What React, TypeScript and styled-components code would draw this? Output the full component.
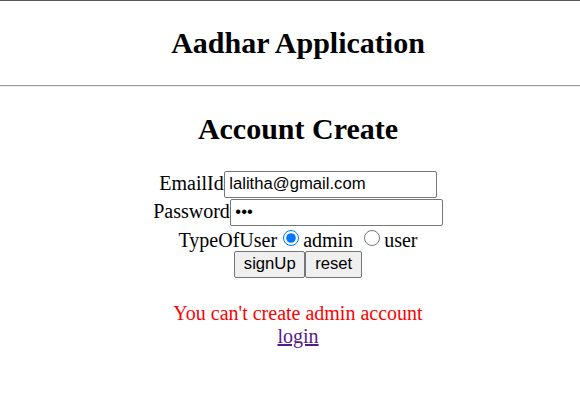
import React from "react";
import styled, { createGlobalStyle } from "styled-components";

const GlobalStyle = createGlobalStyle`
  html, body {
    margin: 0;
    padding: 0;
    background: #ffffff;
  }
  body {
    font-family: "Liberation Serif", "Times New Roman", serif;
    font-size: 20px;
    color: #000000;
    overflow: hidden;
  }
`;

const Page = styled.div`
  width: 580px;
  height: 415px;
  overflow: hidden;
`;

const Header = styled.header`
  border-top: 1px solid #555555;
  padding-left: 16px;
  text-align: center;
`;

const Heading = styled.h2`
  font-size: 30px;
  font-weight: bold;
  line-height: normal;
  margin: 24.9px 0;
`;

const Divider = styled.hr`
  margin: 0;
  height: 0;
  border: 0;
  border-top: 1px solid #9a9a9a;
  border-bottom: 1px solid #eeeeee;
`;

const Main = styled.main`
  padding-left: 16px;
  text-align: center;
`;

const Form = styled.form`
  margin: 0;
`;

const Line = styled.div<{ $h?: number }>`
  text-align: center;
  white-space: nowrap;
  ${(p) => (p.$h ? `height: ${p.$h}px;` : "")}
`;

const TextInput = styled.input`
  box-sizing: border-box;
  width: 213px;
  height: 27px;
  padding: 0 4.5px;
  border: 1px solid #767676;
  border-radius: 2px;
  font-family: "Liberation Sans", Arial, sans-serif;
  font-size: 16.67px;
  color: #000000;
  background: #ffffff;
  vertical-align: baseline;
`;

const Radio = styled.input`
  width: 16px;
  height: 16px;
  margin: 3.75px 3.75px 0 6.25px;
  vertical-align: baseline;
`;

const Button = styled.button`
  box-sizing: border-box;
  height: 27px;
  padding: 0 8.75px;
  border: 1px solid #767676;
  border-radius: 2px;
  background: #efefef;
  font-family: "Liberation Sans", Arial, sans-serif;
  font-size: 16.67px;
  color: #000000;
  vertical-align: top;
`;

const Message = styled.div`
  margin-top: 23px;
  color: #ff0000;
`;

const LoginLink = styled.a`
  color: #551a8b;
  text-decoration: underline;
`;

export default function App() {
  return (
    <Page>
      <GlobalStyle />
      <Header>
        <Heading>Aadhar Application</Heading>
      </Header>
      <Divider />
      <Main>
        <Heading>Account Create</Heading>
        <Form onSubmit={(e) => e.preventDefault()}>
          <Line $h={28}>
            EmailId<TextInput type="text" defaultValue="lalitha@gmail.com" />
          </Line>
          <Line $h={28}>
            Password<TextInput type="password" defaultValue="abc" />
          </Line>
          <Line $h={24}>
            TypeOfUser<Radio type="radio" name="type" defaultChecked />admin{" "}
            <Radio type="radio" name="type" />user
          </Line>
          <Line $h={28}>
            <Button type="submit">signUp</Button><Button type="reset">reset</Button>
          </Line>
        </Form>
        <Message>You can't create admin account</Message>
        <Line>
          <LoginLink href="#login">login</LoginLink>
        </Line>
      </Main>
    </Page>
  );
}
